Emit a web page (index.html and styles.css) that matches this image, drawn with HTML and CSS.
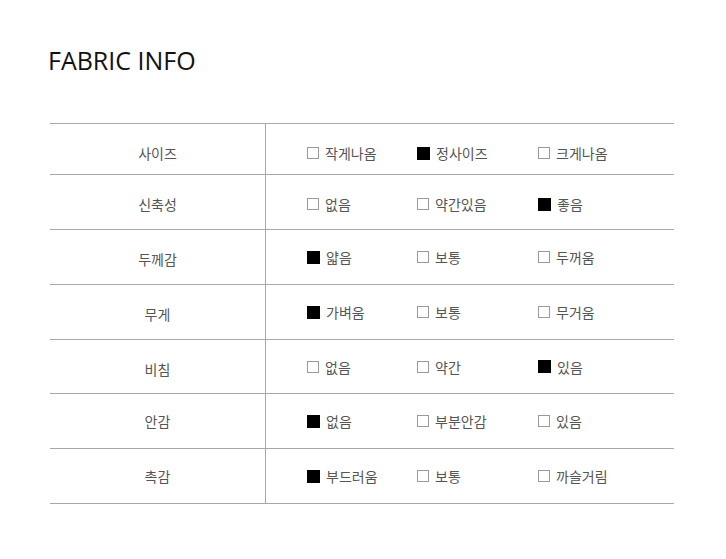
FILE: index.html
```html
<!DOCTYPE html>
<html lang="ko">
<head>
<meta charset="utf-8">
<link rel="stylesheet" href="styles.css">
</head>
<body>
<h1 class="title">FABRIC INFO</h1>
<div class="table">
  <div class="row r1">
    <div class="label">사이즈</div>
    <div class="opts">
      <span class="opt"><i class="box"></i>작게나옴</span>
      <span class="opt"><i class="box on"></i>정사이즈</span>
      <span class="opt"><i class="box"></i>크게나옴</span>
    </div>
  </div>
  <div class="row r2">
    <div class="label">신축성</div>
    <div class="opts">
      <span class="opt"><i class="box"></i>없음</span>
      <span class="opt"><i class="box"></i>약간있음</span>
      <span class="opt"><i class="box on"></i>좋음</span>
    </div>
  </div>
  <div class="row low">
    <div class="label">두께감</div>
    <div class="opts">
      <span class="opt"><i class="box on"></i>얇음</span>
      <span class="opt"><i class="box"></i>보통</span>
      <span class="opt"><i class="box"></i>두꺼움</span>
    </div>
  </div>
  <div class="row low">
    <div class="label">무게</div>
    <div class="opts">
      <span class="opt"><i class="box on"></i>가벼움</span>
      <span class="opt"><i class="box"></i>보통</span>
      <span class="opt"><i class="box"></i>무거움</span>
    </div>
  </div>
  <div class="row low r5">
    <div class="label">비침</div>
    <div class="opts">
      <span class="opt"><i class="box"></i>없음</span>
      <span class="opt"><i class="box"></i>약간</span>
      <span class="opt"><i class="box on"></i>있음</span>
    </div>
  </div>
  <div class="row">
    <div class="label">안감</div>
    <div class="opts">
      <span class="opt"><i class="box on"></i>없음</span>
      <span class="opt"><i class="box"></i>부분안감</span>
      <span class="opt"><i class="box"></i>있음</span>
    </div>
  </div>
  <div class="row">
    <div class="label">촉감</div>
    <div class="opts">
      <span class="opt"><i class="box on"></i>부드러움</span>
      <span class="opt"><i class="box"></i>보통</span>
      <span class="opt"><i class="box"></i>까슬거림</span>
    </div>
  </div>
</div>
</body>
</html>
```
FILE: styles.css
```css
html, body {
  margin: 0;
  padding: 0;
  background: #fff;
}
body {
  font-family: "Noto Sans CJK KR", "Noto Sans", sans-serif;
  color: #555;
}
.title {
  margin: 0;
  padding: 44px 0 0 48px;
  height: 123px;
  box-sizing: border-box;
  font-family: "Open Sans", "Noto Sans", sans-serif;
  font-weight: 400;
  font-size: 25px;
  line-height: 32px;
  color: #111;
}
.table {
  margin-left: 50px;
  width: 624px;
  border-top: 1px solid #a8a8a8;
}
.row {
  display: grid;
  grid-template-columns: 216px 1fr;
  height: 55px;
  box-sizing: border-box;
  border-bottom: 1px solid #a8a8a8;
}
.row.r1 { height: 51px; }
.row.r5 { height: 54px; }
.label {
  border-right: 1px solid #a8a8a8;
  display: flex;
  align-items: center;
  justify-content: center;
  font-size: 14px;
}
.opts {
  display: grid;
  grid-template-columns: 110px 121px 1fr;
  align-items: center;
  padding-left: 41px;
  font-size: 14px;
}
.r1 .label, .r1 .opts { padding-top: 8px; }
.r2 .label, .r2 .opts { padding-top: 4px; }
.low .label { padding-top: 4px; }
.opt {
  display: flex;
  align-items: center;
  white-space: nowrap;
}
.box {
  display: inline-block;
  width: 12px;
  height: 12px;
  box-sizing: border-box;
  border: 1px solid #9a9a9a;
  margin-right: 6px;
}
.box.on {
  width: 13px;
  height: 13px;
  background: #000;
  border-color: #000;
}
```
